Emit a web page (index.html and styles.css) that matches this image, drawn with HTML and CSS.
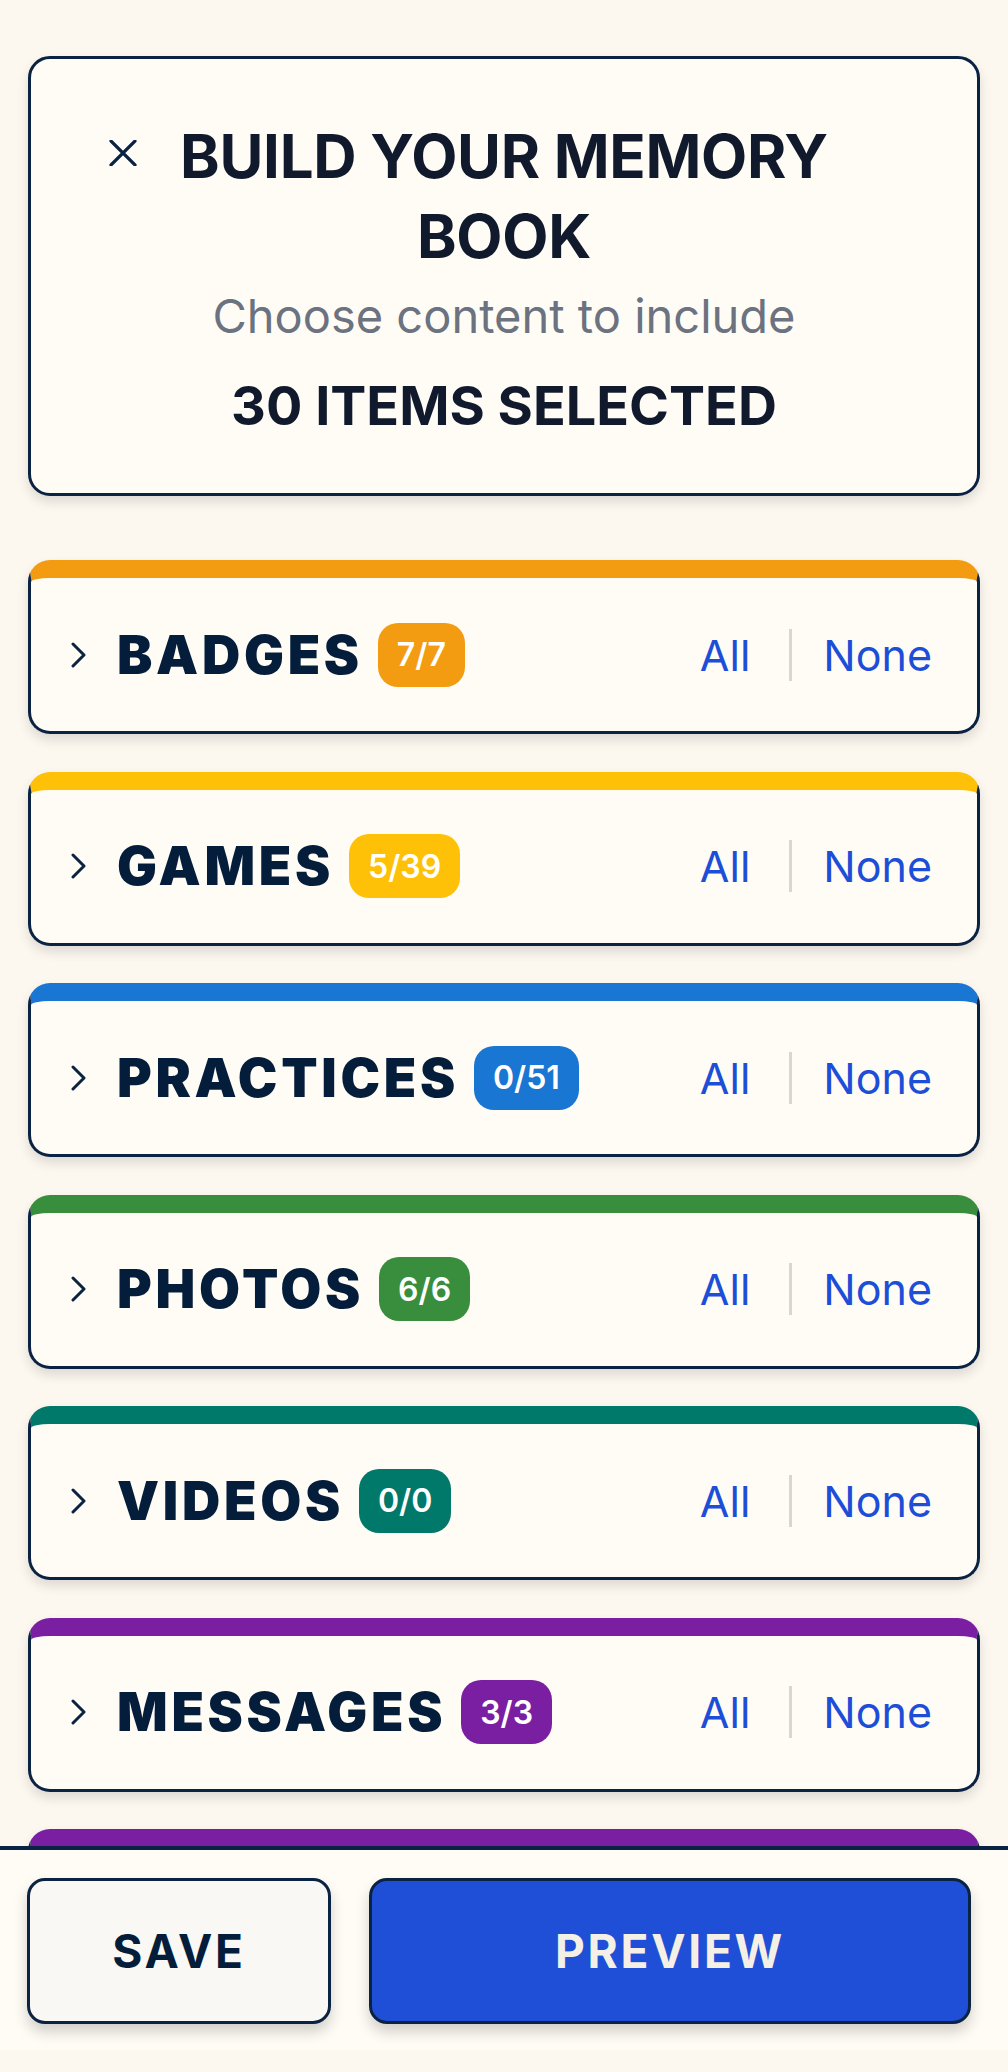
FILE: index.html
```html
<!DOCTYPE html>
<html lang="en">
<head>
    <meta charset="UTF-8">
    <meta name="viewport" content="width=device-width, initial-scale=1.0">
    <title>Build Your Memory Book</title>
    <link rel="stylesheet" href="styles.css">
</head>
<body>

    <div class="page">
        <div class="header-card">
            <button class="close-btn" aria-label="Close">
                <svg width="28" height="26" viewBox="0 0 28 26">
                    <path d="M2 1 L26 25 M26 1 L2 25" stroke="#0b2342" stroke-width="3.2" stroke-linecap="round" fill="none"/>
                </svg>
            </button>
            <h1 class="header-title">BUILD YOUR MEMORY BOOK</h1>
            <p class="header-sub">Choose content to include</p>
            <p class="header-count">30 ITEMS SELECTED</p>
        </div>

        <div class="sections">
            <div class="section orange">
                <div class="section-head">
                    <svg class="chevron" width="16" height="26" viewBox="0 0 16 26"><path d="M2 2 L13 13 L2 24" stroke="#0b2342" stroke-width="3" stroke-linecap="round" stroke-linejoin="round" fill="none"/></svg>
                    <span class="section-title">BADGES</span>
                    <span class="count-pill">7/7</span>
                    <div class="picks">
                        <a class="pick">All</a>
                        <span class="pick-sep"></span>
                        <a class="pick">None</a>
                    </div>
                </div>
            </div>

            <div class="section yellow">
                <div class="section-head">
                    <svg class="chevron" width="16" height="26" viewBox="0 0 16 26"><path d="M2 2 L13 13 L2 24" stroke="#0b2342" stroke-width="3" stroke-linecap="round" stroke-linejoin="round" fill="none"/></svg>
                    <span class="section-title">GAMES</span>
                    <span class="count-pill">5/39</span>
                    <div class="picks">
                        <a class="pick">All</a>
                        <span class="pick-sep"></span>
                        <a class="pick">None</a>
                    </div>
                </div>
            </div>

            <div class="section blue">
                <div class="section-head">
                    <svg class="chevron" width="16" height="26" viewBox="0 0 16 26"><path d="M2 2 L13 13 L2 24" stroke="#0b2342" stroke-width="3" stroke-linecap="round" stroke-linejoin="round" fill="none"/></svg>
                    <span class="section-title">PRACTICES</span>
                    <span class="count-pill">0/51</span>
                    <div class="picks">
                        <a class="pick">All</a>
                        <span class="pick-sep"></span>
                        <a class="pick">None</a>
                    </div>
                </div>
            </div>

            <div class="section green">
                <div class="section-head">
                    <svg class="chevron" width="16" height="26" viewBox="0 0 16 26"><path d="M2 2 L13 13 L2 24" stroke="#0b2342" stroke-width="3" stroke-linecap="round" stroke-linejoin="round" fill="none"/></svg>
                    <span class="section-title">PHOTOS</span>
                    <span class="count-pill">6/6</span>
                    <div class="picks">
                        <a class="pick">All</a>
                        <span class="pick-sep"></span>
                        <a class="pick">None</a>
                    </div>
                </div>
            </div>

            <div class="section teal">
                <div class="section-head">
                    <svg class="chevron" width="16" height="26" viewBox="0 0 16 26"><path d="M2 2 L13 13 L2 24" stroke="#0b2342" stroke-width="3" stroke-linecap="round" stroke-linejoin="round" fill="none"/></svg>
                    <span class="section-title">VIDEOS</span>
                    <span class="count-pill">0/0</span>
                    <div class="picks">
                        <a class="pick">All</a>
                        <span class="pick-sep"></span>
                        <a class="pick">None</a>
                    </div>
                </div>
            </div>

            <div class="section purple">
                <div class="section-head">
                    <svg class="chevron" width="16" height="26" viewBox="0 0 16 26"><path d="M2 2 L13 13 L2 24" stroke="#0b2342" stroke-width="3" stroke-linecap="round" stroke-linejoin="round" fill="none"/></svg>
                    <span class="section-title">MESSAGES</span>
                    <span class="count-pill">3/3</span>
                    <div class="picks">
                        <a class="pick">All</a>
                        <span class="pick-sep"></span>
                        <a class="pick">None</a>
                    </div>
                </div>
            </div>

            <!-- next section sits under the footer, only its top strip shows -->
            <div class="section purple">
                <div class="section-head"></div>
            </div>
        </div>
    </div>

    <div class="footer">
        <div class="footer-bar">
            <button class="btn btn-save">SAVE</button>
            <button class="btn btn-preview">PREVIEW</button>
        </div>
    </div>

</body>
</html>
```

FILE: styles.css
```css
body {
    margin: 0;
    background: #fcf7ef;
    font-family: 'Inter', 'Liberation Sans', sans-serif;
    color: #0b1f3a;
}

.page {
    padding: 56px 28px 60px;
}

.header-card {
    position: relative;
    background: #fffcf5;
    border: 3px solid #0b2342;
    border-radius: 22px;
    box-shadow: 0 6px 12px rgba(0, 0, 0, 0.12);
    padding: 57px 70px 55px;
    text-align: center;
}

.close-btn {
    position: absolute;
    left: 76px;
    top: 78px;
    width: 32px;
    height: 32px;
    padding: 0;
    border: none;
    background: transparent;
    display: flex;
    align-items: center;
    justify-content: center;
    cursor: pointer;
}

.header-title {
    margin: 0;
    font-size: 60px;
    line-height: 80px;
    font-weight: 700;
    color: #111a2c;
    letter-spacing: -0.005em;
}

.header-sub {
    margin: 10px 0 0;
    font-size: 47px;
    line-height: 60px;
    color: #6b7280;
}

.header-count {
    margin: 28px 0 0;
    font-size: 54px;
    line-height: 64px;
    font-weight: 700;
    color: #111a2c;
}

.sections {
    display: flex;
    flex-direction: column;
    gap: 37.5px;
    margin-top: 64px;
}

.section {
    background: #fffcf5;
    border: 3px solid #0b2342;
    border-top: 18px solid #f39c12;
    border-radius: 22px;
    box-shadow: 0 6px 12px rgba(0, 0, 0, 0.12);
}

.section.orange { border-top-color: #f39c12; }
.section.yellow { border-top-color: #ffc107; }
.section.blue { border-top-color: #1976d2; }
.section.green { border-top-color: #388e3c; }
.section.teal { border-top-color: #00796b; }
.section.purple { border-top-color: #7b1fa2; }

.section-head {
    height: 153px;
    display: flex;
    align-items: center;
    padding: 0 45px 0 40px;
}

.chevron {
    flex: none;
    margin-right: 30px;
}

.section-title {
    font-size: 53px;
    font-weight: 900;
    letter-spacing: 0.07em;
    color: #041d3b;
}

.count-pill {
    margin-left: 15px;
    height: 64px;
    padding: 0 19px;
    border-radius: 20px;
    display: flex;
    align-items: center;
    font-size: 32px;
    font-weight: 600;
    color: #fff;
}

.orange .count-pill { background: #f39c12; }
.yellow .count-pill { background: #ffc107; }
.blue .count-pill { background: #1976d2; }
.green .count-pill { background: #388e3c; }
.teal .count-pill { background: #00796b; }
.purple .count-pill { background: #7b1fa2; }

.picks {
    margin-left: auto;
    display: flex;
    align-items: center;
}

.pick {
    font-size: 43px;
    color: #1d4ed8;
    cursor: pointer;
}

.pick-sep {
    width: 3px;
    height: 52px;
    background: #d6d6d2;
    margin: 0 31px 0 39px;
}

.footer {
    position: fixed;
    left: 0;
    right: 0;
    bottom: 0;
    background: #fcf7ef;
    padding-bottom: 22px;
}

.footer-bar {
    background: #fffcf5;
    border-top: 4px solid #0b2342;
    padding: 28px 37px 26px 27px;
    display: flex;
    gap: 38px;
    overflow: hidden;
}

.btn {
    box-sizing: border-box;
    height: 146px;
    padding: 0;
    border: 3px solid #0b2342;
    border-radius: 18px;
    box-shadow: 0 8px 14px rgba(0, 0, 0, 0.18);
    font-family: 'Inter', 'Liberation Sans', sans-serif;
    font-size: 46px;
    font-weight: 700;
    letter-spacing: 0.06em;
    cursor: pointer;
}

.btn-save {
    flex: 1 1 0;
    background: #f9f8f4;
    color: #041d3b;
}

.btn-preview {
    flex: 2 1 0;
    background: #1f4fd6;
    color: #f5f0e6;
}
```
